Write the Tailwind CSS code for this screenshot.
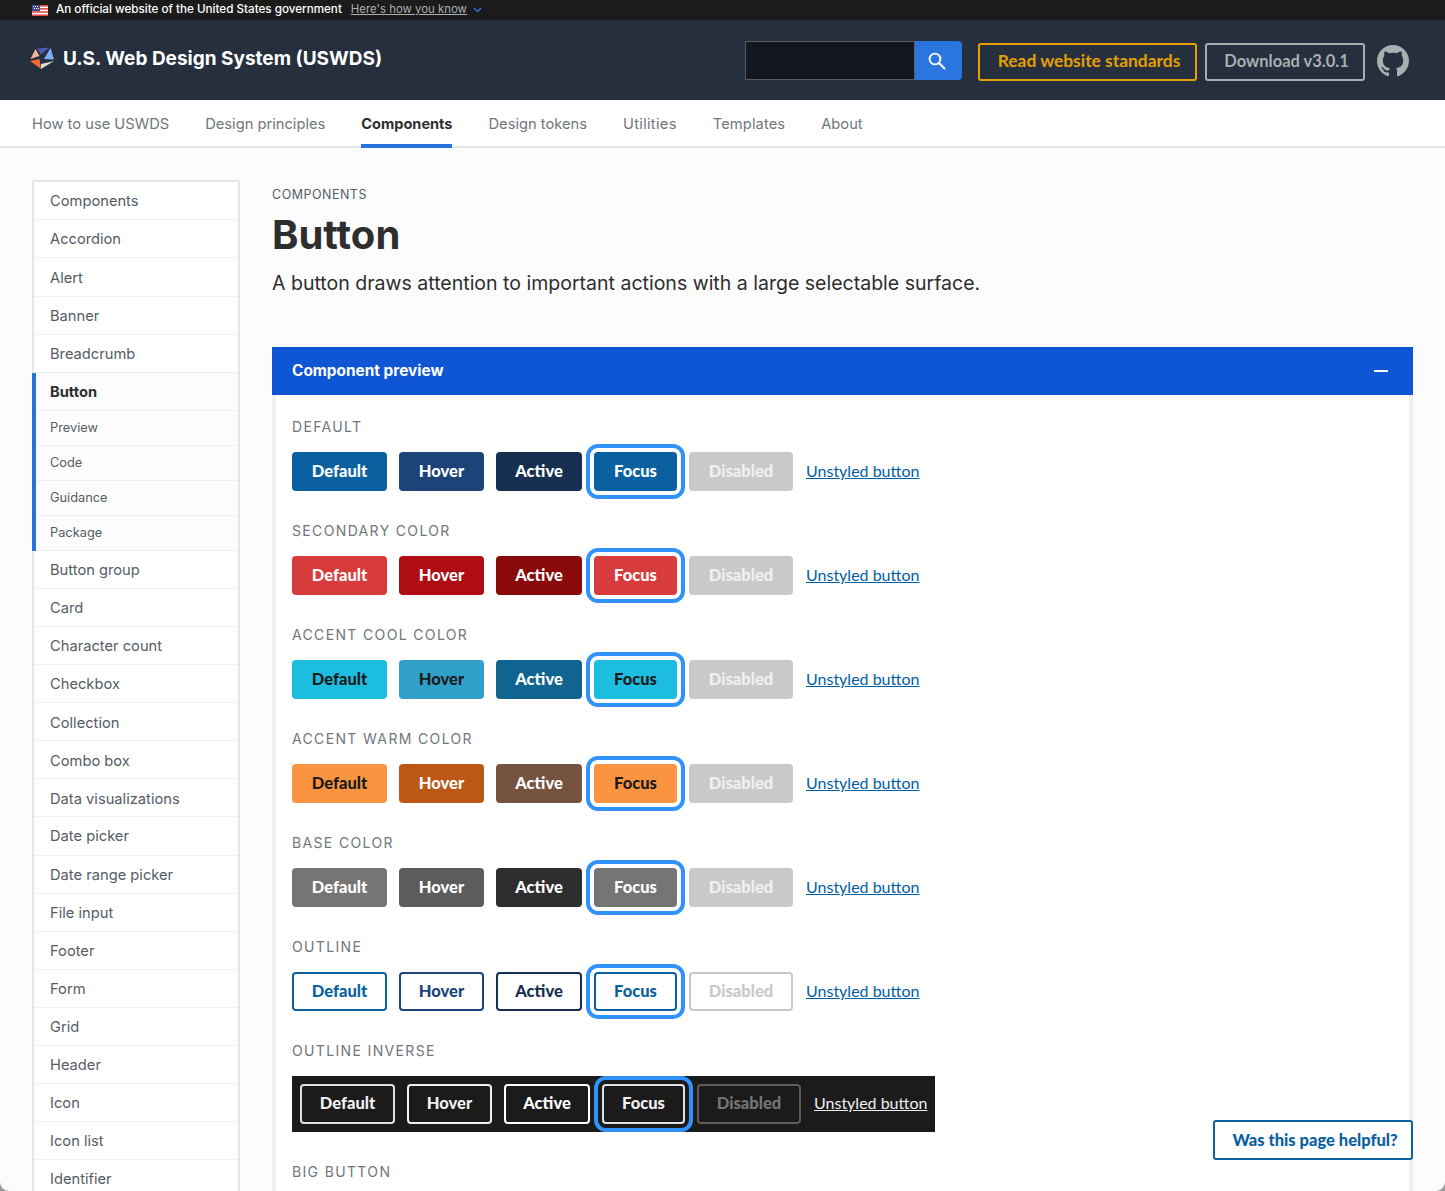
<!DOCTYPE html>
<html lang="en">
<head>
<meta charset="utf-8">
<title>Button | U.S. Web Design System (USWDS)</title>
<script src="https://cdn.jsdelivr.net/npm/@tailwindcss/browser@4"></script>
</head>
<body class="bg-[#9a9a9a]">
<div id="app" class="relative h-[1191px] w-full overflow-hidden rounded-b-[9px] bg-[#fcfcfc] font-[family-name:Inter,sans-serif] text-[#2e2e2e]">

    <!-- gov banner -->
    <div class="flex h-5 items-center bg-[#1b1b1b] pl-8 text-[11.65px] text-white">
        <svg class="w-4 h-[11px] shrink-0" viewBox="0 0 16 11">
            <rect width="16" height="11" fill="#fff"/>
            <rect width="16" height="1.6" fill="#e0484a"/>
            <rect y="3.1" width="16" height="1.6" fill="#e0484a"/>
            <rect y="6.2" width="16" height="1.6" fill="#e0484a"/>
            <rect y="9.4" width="16" height="1.6" fill="#e0484a"/>
            <rect width="8" height="6" fill="#3d4a8f"/>
            <path d="M1 1h1v1H1zM3 1h1v1H3zM5 1h1v1H5zM2 3h1v1H2zM4 3h1v1H4zM6 3h1v1H6z" fill="#fff"/>
        </svg>
        <span class="ml-2 font-medium whitespace-nowrap">An official website of the United States government</span>
        <a href="#" class="ml-[9px] underline text-[11.4px] text-[#a9aeb1] whitespace-nowrap">Here's how you know</a>
        <svg class="ml-[6px] w-[9px] h-[6px]" viewBox="0 0 9 6" fill="none" stroke="#2f81e4" stroke-width="1.2"><path d="M1 1l3.5 3.5L8 1"/></svg>
    </div>

    <!-- header -->
    <div class="flex h-20 items-center bg-[#252f3e] pl-[30px] pr-9">
        <svg class="w-6 h-[23px] shrink-0 -mt-1" viewBox="0 0 24 23">
            <polygon points="7,1.5 19.5,0.5 11,7.5" fill="#4b59b3"/>
            <polygon points="20.5,1 24,12.5 14,12" fill="#7cb0f5"/>
            <polygon points="24,14 11,22 11,17" fill="#d9dcdf"/>
            <polygon points="0,14 9.5,12 11,22" fill="#ee6a33"/>
            <polygon points="5.5,2 9.5,9 0.5,12" fill="#f2b89e"/>
        </svg>
        <a href="#" class="ml-[9px] text-[19px] font-bold text-white whitespace-nowrap -mt-[2px]">U.S. Web Design System (USWDS)</a>
        <div class="ml-auto flex items-center">
            <div class="flex mt-[1px]">
                <input type="text" class="h-[39px] w-[170px] bg-[#131722] border border-[#5c5c5c]">
                <button class="flex h-[39px] w-[47px] items-center justify-center rounded-r-[4px] bg-[#2a76de] pr-[3px]">
                    <svg class="w-[20px] h-[20px]" viewBox="0 0 20 20" fill="none" stroke="#fff" stroke-width="1.9"><circle cx="8" cy="8" r="5.4"/><path d="M12 12l6 6"/></svg>
                </button>
            </div>
            <a href="#" class="ml-4 mt-1 flex h-[38px] w-[219px] items-center justify-center rounded-[3px] border-2 border-[#e5a000] pb-[2px] pl-[3px] text-[17.4px] font-bold text-[#e5a000] font-[family-name:Lato,sans-serif]">Read website standards</a>
            <a href="#" class="ml-2 mt-1 flex h-[38px] w-[160px] items-center justify-center rounded-[3px] border-2 border-[#a9aeb1] pb-[2px] pl-[3px] text-[16.5px] font-bold text-[#a9aeb1] font-[family-name:Lato,sans-serif]">Download v3.0.1</a>
            <svg class="ml-3 mt-[2px] w-8 h-8" viewBox="0 0 16 16" fill="#a9aeb1"><path d="M8 0C3.58 0 0 3.58 0 8c0 3.54 2.29 6.53 5.47 7.59.4.07.55-.17.55-.38 0-.19-.01-.82-.01-1.49-2.01.37-2.53-.49-2.69-.94-.09-.23-.48-.94-.82-1.13-.28-.15-.68-.52-.01-.53.63-.01 1.08.58 1.23.82.72 1.21 1.87.87 2.33.66.07-.52.28-.87.51-1.07-1.78-.2-3.64-.89-3.64-3.95 0-.87.31-1.59.82-2.15-.08-.2-.36-1.02.08-2.12 0 0 .67-.21 2.2.82.64-.18 1.32-.27 2-.27s1.36.09 2 .27c1.53-1.04 2.2-.82 2.2-.82.44 1.1.16 1.92.08 2.12.51.56.82 1.27.82 2.15 0 3.07-1.87 3.75-3.65 3.95.29.25.54.73.54 1.48 0 1.07-.01 1.93-.01 2.2 0 .21.15.46.55.38A8.01 8.01 0 0 0 16 8c0-4.42-3.58-8-8-8z"/></svg>
        </div>
    </div>

    <!-- primary nav -->
    <nav class="flex h-12 gap-9 border-b-2 border-[#e6e6e6] bg-white pl-8 text-[14.7px] text-[#71767a]">
        <a href="#" class="pt-[13px]">How to use USWDS</a>
        <a href="#" class="pt-[13px]">Design principles</a>
        <a href="#" class="h-12 border-b-4 border-[#2672de] pt-[14px] text-[14.55px] font-bold text-[#2e2e2e]">Components</a>
        <a href="#" class="pt-[13px]">Design tokens</a>
        <a href="#" class="pt-[13px] tracking-[0.3px]">Utilities</a>
        <a href="#" class="pt-[13px] tracking-[0.1px]">Templates</a>
        <a href="#" class="pt-[13px]">About</a>
    </nav>

    <div class="flex items-start px-8 pt-8">

        <!-- sidenav -->
        <aside class="w-[208px] shrink-0 rounded-t-[3px] border-x-2 border-t-2 border-[#e6e6e6] bg-white text-[14.7px] text-[#565c65]">
            <a href="#" class="flex h-[38px] items-center border-b border-[#f0f0f0] pl-4 pt-[1px]">Components</a>
            <a href="#" class="flex h-[38.3px] items-center border-b border-[#f0f0f0] pl-4 pt-[1px]">Accordion</a>
            <a href="#" class="flex h-[38.3px] items-center border-b border-[#f0f0f0] pl-4 pt-[2px]">Alert</a>
            <a href="#" class="flex h-[38.3px] items-center border-b border-[#f0f0f0] pl-4 pt-[1px]">Banner</a>
            <a href="#" class="flex h-[38.3px] items-center border-b border-[#f0f0f0] pl-4 pt-[1px]">Breadcrumb</a>
            <div class="-ml-[2px] border-l-4 border-[#2672de] bg-[#fcfcfc]">
                <a href="#" class="flex h-[38px] items-center border-b border-[#f0f0f0] pl-[14px] pt-[1px] font-bold text-[#2e2e2e]">Button</a>
                <a href="#" class="flex h-[35px] items-center border-b border-[#f0f0f0] pb-[1px] pl-[14px] text-[12.8px]">Preview</a>
                <a href="#" class="flex h-[35px] items-center border-b border-[#f0f0f0] pb-[1px] pl-[14px] text-[12.8px]">Code</a>
                <a href="#" class="flex h-[35px] items-center border-b border-[#f0f0f0] pb-[1px] pl-[14px] text-[12.8px]">Guidance</a>
                <a href="#" class="flex h-[35px] items-center border-b border-[#f0f0f0] pb-[1px] pl-[14px] text-[12.8px]">Package</a>
            </div>
            <a href="#" class="flex h-[38px] items-center border-b border-[#f0f0f0] pl-4 pt-[1px]">Button group</a>
            <a href="#" class="flex h-[38.06px] items-center border-b border-[#f0f0f0] pl-4 pt-[1px]">Card</a>
            <a href="#" class="flex h-[38.06px] items-center border-b border-[#f0f0f0] pl-4 pt-[1px]">Character count</a>
            <a href="#" class="flex h-[38.06px] items-center border-b border-[#f0f0f0] pl-4 pt-[1px]">Checkbox</a>
            <a href="#" class="flex h-[38.06px] items-center border-b border-[#f0f0f0] pl-4 pt-[2px]">Collection</a>
            <a href="#" class="flex h-[38.06px] items-center border-b border-[#f0f0f0] pl-4 pt-[2px]">Combo box</a>
            <a href="#" class="flex h-[38.06px] items-center border-b border-[#f0f0f0] pl-4 pt-[2px]">Data visualizations</a>
            <a href="#" class="flex h-[38.06px] items-center border-b border-[#f0f0f0] pl-4 pt-[1px]">Date picker</a>
            <a href="#" class="flex h-[38.06px] items-center border-b border-[#f0f0f0] pl-4 pt-[1px]">Date range picker</a>
            <a href="#" class="flex h-[38.06px] items-center border-b border-[#f0f0f0] pl-4 pt-[1px]">File input</a>
            <a href="#" class="flex h-[38.06px] items-center border-b border-[#f0f0f0] pl-4 pt-[1px]">Footer</a>
            <a href="#" class="flex h-[38.06px] items-center border-b border-[#f0f0f0] pl-4 pt-[1px]">Form</a>
            <a href="#" class="flex h-[38.06px] items-center border-b border-[#f0f0f0] pl-4 pt-[1px]">Grid</a>
            <a href="#" class="flex h-[38.06px] items-center border-b border-[#f0f0f0] pl-4 pt-[1px]">Header</a>
            <a href="#" class="flex h-[38.06px] items-center border-b border-[#f0f0f0] pl-4 pt-[1px]">Icon</a>
            <a href="#" class="flex h-[38.06px] items-center border-b border-[#f0f0f0] pl-4 pt-[1px]">Icon list</a>
            <a href="#" class="flex h-[38.06px] items-center border-b border-[#f0f0f0] pl-4 pt-[1px]">Identifier</a>
        </aside>

        <!-- main -->
        <main class="ml-8 min-w-0 flex-1">
            <p class="mt-[6px] text-[12.5px] uppercase tracking-[0.5px] text-[#565c65] leading-[18px]">Components</p>
            <h1 class="mt-[7px] text-[40px] font-bold leading-[48px] text-[#2e2e2e]">Button</h1>
            <p class="mt-[10px] text-[19.53px] leading-[28px] text-[#2e2e2e]">A button draws attention to important actions with a large selectable surface.</p>

            <div class="mt-[50px] flex h-12 items-center justify-between bg-[#0f56d4] pl-5 pr-[25px] pb-[1px] text-white">
                <span class="text-[15.4px] font-bold">Component preview</span>
                <span class="h-[2px] w-[14px] bg-white"></span>
            </div>

            <section class="border-x-4 border-[#f0f0f0] bg-white pl-4 pt-[22px] pb-10 font-[family-name:Lato,sans-serif] text-[16.5px] font-black">
                <h2 class="h-5 text-[14px] font-normal uppercase tracking-[1.35px] leading-[20px] text-[#71767a] font-[family-name:Inter,sans-serif]">Default</h2>
                <div class="mt-[15px] flex items-center gap-3 text-white [&>*]:pb-[1px]">
                    <button class="h-[39px] w-[95px] rounded-[4px] bg-[#0b61a0]">Default</button>
                    <button class="h-[39px] w-[85px] rounded-[4px] bg-[#1c4478]">Hover</button>
                    <button class="h-[39px] w-[86px] rounded-[4px] bg-[#172f51]">Active</button>
                    <button class="h-[39px] w-[83px] rounded-[4px] bg-[#0b61a0] outline-4 outline-offset-4 outline-[#2f93fb]">Focus</button>
                    <button class="h-[39px] w-[104px] rounded-[4px] bg-[#c9c9c9] text-[#f0f0f0]">Disabled</button>
                    <a href="#" class="ml-[1px] text-[16px] font-normal text-[#005ea2] underline">Unstyled button</a>
                </div>

                <h2 class="mt-[30px] h-5 text-[14px] font-normal uppercase tracking-[1.35px] leading-[20px] text-[#71767a] font-[family-name:Inter,sans-serif]">Secondary color</h2>
                <div class="mt-[15px] flex items-center gap-3 text-white [&>*]:pb-[1px]">
                    <button class="h-[39px] w-[95px] rounded-[4px] bg-[#d83b3b]">Default</button>
                    <button class="h-[39px] w-[85px] rounded-[4px] bg-[#af0c14]">Hover</button>
                    <button class="h-[39px] w-[86px] rounded-[4px] bg-[#8a0a0a]">Active</button>
                    <button class="h-[39px] w-[83px] rounded-[4px] bg-[#d83b3b] outline-4 outline-offset-4 outline-[#2f93fb]">Focus</button>
                    <button class="h-[39px] w-[104px] rounded-[4px] bg-[#c9c9c9] text-[#f0f0f0]">Disabled</button>
                    <a href="#" class="ml-[1px] text-[16px] font-normal text-[#005ea2] underline">Unstyled button</a>
                </div>

                <h2 class="mt-[30px] h-5 text-[14px] font-normal uppercase tracking-[1.35px] leading-[20px] text-[#71767a] font-[family-name:Inter,sans-serif]">Accent cool color</h2>
                <div class="mt-[15px] flex items-center gap-3 text-[#1b1b1b] [&>*]:pb-[1px]">
                    <button class="h-[39px] w-[95px] rounded-[4px] bg-[#1dbde0]">Default</button>
                    <button class="h-[39px] w-[85px] rounded-[4px] bg-[#2fa0c8]">Hover</button>
                    <button class="h-[39px] w-[86px] rounded-[4px] bg-[#10648f] text-white">Active</button>
                    <button class="h-[39px] w-[83px] rounded-[4px] bg-[#1dbde0] outline-4 outline-offset-4 outline-[#2f93fb]">Focus</button>
                    <button class="h-[39px] w-[104px] rounded-[4px] bg-[#c9c9c9] text-[#f0f0f0]">Disabled</button>
                    <a href="#" class="ml-[1px] text-[16px] font-normal text-[#005ea2] underline">Unstyled button</a>
                </div>

                <h2 class="mt-[30px] h-5 text-[14px] font-normal uppercase tracking-[1.35px] leading-[20px] text-[#71767a] font-[family-name:Inter,sans-serif]">Accent warm color</h2>
                <div class="mt-[15px] flex items-center gap-3 text-[#1b1b1b] [&>*]:pb-[1px]">
                    <button class="h-[39px] w-[95px] rounded-[4px] bg-[#fa9441]">Default</button>
                    <button class="h-[39px] w-[85px] rounded-[4px] bg-[#bd5716] text-white">Hover</button>
                    <button class="h-[39px] w-[86px] rounded-[4px] bg-[#75533f] text-white">Active</button>
                    <button class="h-[39px] w-[83px] rounded-[4px] bg-[#fa9441] outline-4 outline-offset-4 outline-[#2f93fb]">Focus</button>
                    <button class="h-[39px] w-[104px] rounded-[4px] bg-[#c9c9c9] text-[#f0f0f0]">Disabled</button>
                    <a href="#" class="ml-[1px] text-[16px] font-normal text-[#005ea2] underline">Unstyled button</a>
                </div>

                <h2 class="mt-[30px] h-5 text-[14px] font-normal uppercase tracking-[1.35px] leading-[20px] text-[#71767a] font-[family-name:Inter,sans-serif]">Base color</h2>
                <div class="mt-[15px] flex items-center gap-3 text-white [&>*]:pb-[1px]">
                    <button class="h-[39px] w-[95px] rounded-[4px] bg-[#757575]">Default</button>
                    <button class="h-[39px] w-[85px] rounded-[4px] bg-[#5c5c5c]">Hover</button>
                    <button class="h-[39px] w-[86px] rounded-[4px] bg-[#2e2e2e]">Active</button>
                    <button class="h-[39px] w-[83px] rounded-[4px] bg-[#757575] outline-4 outline-offset-4 outline-[#2f93fb]">Focus</button>
                    <button class="h-[39px] w-[104px] rounded-[4px] bg-[#c9c9c9] text-[#f0f0f0]">Disabled</button>
                    <a href="#" class="ml-[1px] text-[16px] font-normal text-[#005ea2] underline">Unstyled button</a>
                </div>

                <h2 class="mt-[30px] h-5 text-[14px] font-normal uppercase tracking-[1.35px] leading-[20px] text-[#71767a] font-[family-name:Inter,sans-serif]">Outline</h2>
                <div class="mt-[15px] flex items-center gap-3 [&>*]:pb-[1px]">
                    <button class="h-[39px] w-[95px] rounded-[4px] border-2 border-[#0b61a0] text-[#0b61a0]">Default</button>
                    <button class="h-[39px] w-[85px] rounded-[4px] border-2 border-[#1c4478] text-[#1c4478]">Hover</button>
                    <button class="h-[39px] w-[86px] rounded-[4px] border-2 border-[#172f51] text-[#172f51]">Active</button>
                    <button class="h-[39px] w-[83px] rounded-[4px] border-2 border-[#0b61a0] text-[#0b61a0] outline-4 outline-offset-4 outline-[#2f93fb]">Focus</button>
                    <button class="h-[39px] w-[104px] rounded-[4px] border-2 border-[#c9c9c9] text-[#c9c9c9]">Disabled</button>
                    <a href="#" class="ml-[1px] text-[16px] font-normal text-[#005ea2] underline">Unstyled button</a>
                </div>

                <h2 class="mt-[30px] h-5 text-[14px] font-normal uppercase tracking-[1.35px] leading-[20px] text-[#71767a] font-[family-name:Inter,sans-serif]">Outline inverse</h2>
                <div class="mt-[15px] flex h-14 w-[643px] items-center gap-3 bg-[#1b1b1b] pl-2 text-[#f0f0f0] [&>*]:pb-[2px]">
                    <button class="h-10 w-[95px] rounded-[4px] border-2 border-[#dfe1e2]">Default</button>
                    <button class="h-10 w-[85px] rounded-[4px] border-2 border-[#f0f0f0]">Hover</button>
                    <button class="h-10 w-[86px] rounded-[4px] border-2 border-white text-white">Active</button>
                    <button class="h-10 w-[83px] rounded-[4px] border-2 border-[#dfe1e2] outline-4 outline-offset-4 outline-[#2f93fb]">Focus</button>
                    <button class="h-10 w-[104px] rounded-[4px] border-2 border-[#5c5c5c] text-[#757575]">Disabled</button>
                    <a href="#" class="ml-[1px] text-[16px] font-normal text-[#f0f0f0] underline">Unstyled button</a>
                </div>

                <h2 class="mt-[30px] h-5 text-[14px] font-normal uppercase tracking-[1.35px] leading-[20px] text-[#71767a] font-[family-name:Inter,sans-serif]">Big button</h2>
            </section>
        </main>
    </div>

    <!-- feedback tab -->
    <button class="absolute left-[1213px] top-[1120px] h-10 w-[200px] rounded-[3px] border-2 border-[#0b61a0] bg-white pl-[4px] text-[16.5px] font-black text-[#0b61a0] font-[family-name:Lato,sans-serif]">Was this page helpful?</button>
</div>
</body>
</html>
